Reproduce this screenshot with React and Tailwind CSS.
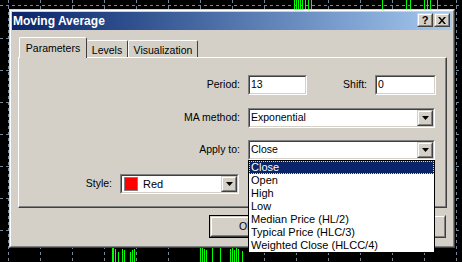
import React from "react";

const raised =
  "border border-t-[#d4d0c8] border-l-[#d4d0c8] border-r-[#404040] border-b-[#404040]";
const raisedInner =
  "border border-t-white border-l-white border-r-[#808080] border-b-[#808080]";
const sunken =
  "border border-t-[#808080] border-l-[#808080] border-r-white border-b-white";
const sunkenInner =
  "border border-t-[#404040] border-l-[#404040] border-r-[#d4d0c8] border-b-[#d4d0c8]";

function Chart() {
  const vx = [8, 40, 72, 104, 136, 168, 200, 232, 264, 296, 328, 360, 392, 424, 456];
  const hy = [5, 38, 70, 102, 134, 166, 198, 230];
  const topBars = [294, 296, 298, 300, 302, 305, 308, 311, 382, 406, 410, 424, 427, 430, 437];
  const bottomBars = [
    [112, 248], [113, 248], [115, 249], [118, 252], [122, 249], [124, 250],
    [130, 252], [132, 250], [134, 249], [200, 248], [202, 248], [204, 249],
    [206, 250], [212, 248], [220, 248], [230, 249], [232, 248], [234, 250],
    [236, 248], [238, 249], [242, 251],
  ];
  return (
    <svg className="absolute inset-0" width="462" height="262">
      {vx.map((x) => (
        <line key={"v" + x} x1={x + 0.5} y1="0" x2={x + 0.5} y2="262" stroke="#778899" strokeDasharray="3 3" />
      ))}
      {hy.map((y) => (
        <line key={"h" + y} x1="0" y1={y + 0.5} x2="462" y2={y + 0.5} stroke="#778899" strokeDasharray="3 3" />
      ))}
      {topBars.map((x) => (
        <line key={"t" + x} x1={x + 0.5} y1="0" x2={x + 0.5} y2="9" stroke="#00ff00" />
      ))}
      {bottomBars.map(([x, y]) => (
        <line key={"b" + x} x1={x + 0.5} y1={y} x2={x + 0.5} y2="262" stroke="#00ff00" />
      ))}
    </svg>
  );
}

function Field({ w, children }) {
  return (
    <div className={`${sunken} h-[20px] ${w}`}>
      <div className={`${sunkenInner} h-full bg-white flex items-center pl-[1px]`}>{children}</div>
    </div>
  );
}

function Arrow() {
  return (
    <div className={`${raised} w-[16px] h-[16px]`}>
      <div className={`${raisedInner} h-full bg-[#d4d0c8] flex items-center justify-center`}>
        <svg width="7" height="4" viewBox="0 0 7 4">
          <path d="M0 0h7L3.5 4z" fill="#000" />
        </svg>
      </div>
    </div>
  );
}

function Select({ w, children }) {
  return (
    <div className={`${sunken} h-[20px] ${w}`}>
      <div className={`${sunkenInner} h-full bg-white flex items-center justify-between pl-[1px]`}>
        <div className="flex items-center">{children}</div>
        <Arrow />
      </div>
    </div>
  );
}

function Button({ label, isDefault }) {
  const inner = (
    <div className={`${raised} h-full`}>
      <div className={`${raisedInner} h-full bg-[#d4d0c8] flex items-center justify-center`}>{label}</div>
    </div>
  );
  return (
    <div className={`w-[75px] h-[23px] ${isDefault ? "border border-black" : ""}`}>{inner}</div>
  );
}

export default function App() {
  const items = [
    "Close",
    "Open",
    "High",
    "Low",
    "Median Price (HL/2)",
    "Typical Price (HLC/3)",
    "Weighted Close (HLCC/4)",
  ];
  return (
    <div
      className="relative w-[462px] h-[262px] bg-black overflow-hidden text-[10.5px] text-black"
      style={{ fontFamily: '"Liberation Sans", Arial, sans-serif' }}
    >
      <Chart />

      {/* dialog window */}
      <div className={`absolute left-[9px] top-[9px] w-[446px] h-[239px] bg-[#d4d0c8] ${raised}`}>
        <div className={`${raisedInner} h-full p-[1px] flex flex-col`}>
          {/* title bar */}
          <div className="h-[18px] flex justify-between pl-[1px] pr-[2px] bg-gradient-to-r from-[#0a246a] to-[#a6caf0]">
            <span className="text-white font-bold text-[12px] leading-[18px]">Moving Average</span>
            <div className="flex gap-[1px] pt-[1px]">
              <div className={`${raised} w-[16px] h-[14px]`}>
                <div className={`${raisedInner} h-full bg-[#d4d0c8] flex items-center justify-center font-bold text-[11px] leading-none`}>?</div>
              </div>
              <div className={`${raised} w-[16px] h-[14px]`}>
                <div className={`${raisedInner} h-full bg-[#d4d0c8] flex items-center justify-center`}>
                  <svg width="8" height="7" viewBox="0 0 8 7">
                    <path d="M0 0h2l2 2.5L6 0h2L5 3.5 8 7H6L4 4.5 2 7H0l3-3.5z" fill="#000" />
                  </svg>
                </div>
              </div>
            </div>
          </div>

          {/* tabs */}
          <div className="ml-[6px] w-[429px] mt-[7px]">
            <div className="flex items-end h-[20px] pl-[1px]">
              <div className="relative z-10 w-[68px] h-[21px] -mb-[1px] bg-[#d4d0c8] border-t border-l border-white border-r border-r-[#404040] rounded-t-[2px] flex justify-center pt-[3px]">
                Parameters
              </div>
              <div className="w-[41px] h-[17px] border-t border-white border-r border-r-[#404040] rounded-t-[2px] flex justify-center pt-[2px]">
                Levels
              </div>
              <div className="w-[70px] h-[17px] border-t border-l border-white border-r border-r-[#404040] rounded-t-[2px] flex justify-center pt-[2px]">
                Visualization
              </div>
            </div>

            {/* tab panel */}
            <div className="h-[151px] border border-t-white border-l-white border-r-[#404040] border-b-[#404040]">
              <div className="h-full border-r border-b border-[#808080] flex flex-col">
                <div className="flex items-center mt-[17px]">
                  <span className="w-[221px] text-right">Period:</span>
                  <div className="ml-[8px]">
                    <Field w="w-[59px]">13</Field>
                  </div>
                  <span className="w-[60px] text-right">Shift:</span>
                  <div className="ml-[8px]">
                    <Field w="w-[61px]">0</Field>
                  </div>
                </div>
                <div className="flex items-center mt-[13px]">
                  <span className="w-[221px] text-right">MA method:</span>
                  <div className="ml-[8px]">
                    <Select w="w-[187px]">Exponential</Select>
                  </div>
                </div>
                <div className="flex items-center mt-[12px]">
                  <span className="w-[221px] text-right">Apply to:</span>
                  <div className="ml-[8px]">
                    <Select w="w-[187px]">Close</Select>
                  </div>
                </div>
                <div className="flex items-center mt-[14px]">
                  <span className="w-[93px] text-right">Style:</span>
                  <div className="ml-[8px]">
                    <Select w="w-[119px]">
                      <span className="w-[14px] h-[14px] border border-[#808080] bg-[#ff0000] ml-[1px]" />
                      <span className="ml-[5px] text-[11px]">Red</span>
                    </Select>
                  </div>
                </div>
              </div>
            </div>
          </div>

          {/* buttons */}
          <div className="flex justify-end gap-[6px] mt-[7px] mr-[6px]">
            <Button label="OK" isDefault />
            <Button label="Cancel" />
            <Button label="Reset" />
          </div>
        </div>
      </div>

      {/* open combo list */}
      <div className="absolute left-[248px] top-[160px] w-[187px] h-[93px] bg-white border border-black text-[11px] leading-[13px]">
        {items.map((it, i) => (
          <div
            key={it}
            className={
              i === 0
                ? "h-[13px] bg-[#0a246a] text-white border border-dotted border-[#f5db95] pl-[1px] leading-[11px]"
                : "h-[13px] pl-[2px]"
            }
          >
            {it}
          </div>
        ))}
      </div>
    </div>
  );
}
